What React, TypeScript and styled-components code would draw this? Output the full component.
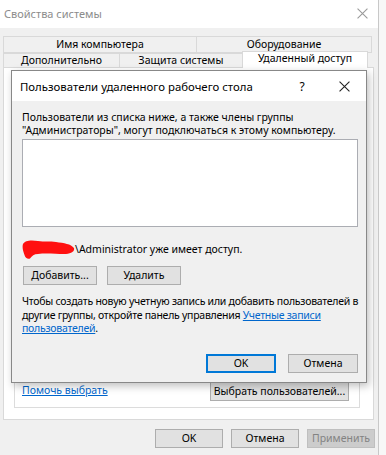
import React from "react";
import styled, { createGlobalStyle } from "styled-components";

const Global = createGlobalStyle`
  html, body { margin: 0; padding: 0; background: #f7f7f7; }
  body { font-family: "Noto Sans", "Segoe UI", Arial, sans-serif; font-size: 10.5px; color: #000; }
  * { box-sizing: border-box; }
`;

const Win = styled.div`
  width: 379px;
  height: 455px;
  background: #f0f0f0;
  border-right: 1px solid #c8c8c8;
  display: flex;
  flex-direction: column;
`;

const TitleBar = styled.div`
  height: 28px;
  flex: none;
  background: #fff;
  display: flex;
  align-items: center;
  justify-content: space-between;
  padding: 0 10px 2px 4px;
  color: #8c8c8c;
  font-size: 11px;
`;

const Body = styled.div`
  padding: 8px 0 0 3px;
  display: flex;
  flex-direction: column;
`;

const TabRow = styled.div<{ $h: number }>`
  display: flex;
  height: ${(p) => p.$h}px;
`;

const Tab = styled.div<{ $w: number; $sel?: boolean }>`
  width: ${(p) => p.$w}px;
  height: ${(p) => (p.$sel ? 17 : undefined)}px;
  margin-top: ${(p) => (p.$sel ? -2 : 0)}px;
  margin-left: -1px;
  &:first-child { margin-left: 0; }
  border: 1px solid #d9d9d9;
  border-bottom: ${(p) => (p.$sel ? "none" : "1px solid #d9d9d9")};
  background: ${(p) => (p.$sel ? "#fff" : "#f0f0f0")};
  position: relative;
  z-index: ${(p) => (p.$sel ? 2 : 0)};
  display: flex;
  align-items: center;
  justify-content: center;
  font-size: 10.5px;
  line-height: 1;
  white-space: nowrap;
  padding-bottom: ${(p) => (p.$sel ? 3 : 0)}px;
`;

const Panel = styled.div`
  width: 371px;
  height: 353px;
  margin-top: -1px;
  border: 1px solid #d9d9d9;
  background: #fff;
  position: relative;
  display: flex;
  flex-direction: column;
  justify-content: flex-end;
  padding: 0 13px 11px 10px;
`;

const GroupBox = styled.div`
  height: 120px;
  border: 1px solid #dcdcdc;
  display: flex;
  align-items: flex-end;
  justify-content: space-between;
  padding: 0 10px 6px 7px;
`;

const Link = styled.span`
  color: #0066cc;
  text-decoration: underline;
  cursor: pointer;
`;

const HelpLink = styled(Link)`
  margin-bottom: 4px;
`;

const Btn = styled.button<{ $w: number; $primary?: boolean; $disabled?: boolean }>`
  width: ${(p) => p.$w}px;
  height: 19px;
  padding: 0;
  font-family: inherit;
  font-size: 10.5px;
  line-height: 1;
  white-space: nowrap;
  background: ${(p) => (p.$disabled ? "#cccccc" : "#e1e1e1")};
  color: ${(p) => (p.$disabled ? "#838383" : "#000")};
  border: ${(p) => (p.$primary ? "2px solid #0078d7" : p.$disabled ? "1px solid #bfbfbf" : "1px solid #adadad")};
`;

const Footer = styled.div`
  display: flex;
  justify-content: flex-end;
  gap: 8px;
  padding: 9px 3px 0 0;
`;

const Dialog = styled.div`
  position: absolute;
  left: 7px;
  top: 2px;
  width: 356px;
  height: 313px;
  border: 1px solid #888;
  background: #f0f0f0;
  box-shadow: 2px 3px 8px rgba(0, 0, 0, 0.25);
  display: flex;
  flex-direction: column;
  z-index: 5;
`;

const DlgTitle = styled.div`
  height: 30px;
  flex: none;
  background: #fff;
  display: flex;
  align-items: center;
  padding: 0 0 0 8px;
  font-size: 11.4px;
`;

const DlgTitleText = styled.span`
  flex: 1;
`;

const Help = styled.span`
  width: 20px;
  text-align: center;
  font-size: 12px;
  margin-right: 27px;
`;

const CloseIcon = styled.svg<{ $c: string }>`
  stroke: ${(p) => p.$c};
  stroke-width: 1;
  fill: none;
  flex: none;
`;

const DlgBody = styled.div`
  flex: 1;
  display: flex;
  flex-direction: column;
  padding: 10px 8px 9px 10px;
`;

const Line = styled.div`
  line-height: 13px;
  white-space: nowrap;
`;

const ListBox = styled.div`
  margin-top: 2px;
  width: 336px;
  height: 88px;
  background: #fff;
  border: 1px solid #abadb3;
`;

const AccessLine = styled.div`
  margin-top: 12px;
  height: 20px;
  display: flex;
  align-items: center;
`;

const BtnRow = styled.div`
  margin-top: 7px;
  display: flex;
  gap: 10px;
  padding-left: 1px;
`;

const Info = styled.div`
  margin-top: 10px;
  display: flex;
  flex-direction: column;
  letter-spacing: -0.25px;
  & > div { line-height: 13.5px; }
`;

const DlgFooter = styled.div`
  margin-top: auto;
  display: flex;
  justify-content: flex-end;
  gap: 12px;
`;

const Scribble = () => (
  <svg width="53" height="20" viewBox="0 0 53 20" style={{ flex: "none" }}>
    <path
      d="M1 5 C3 1 10 1 16 2 C22 3 28 2 34 3 C42 4 49 5 52 9 C53 13 48 15 42 15 C34 15 24 14 16 15 C12 15 10 17 8 19.5 C6 20.5 3 19 2.5 16 C1 12 0 8 1 5 Z"
      fill="#ff1010"
    />
  </svg>
);

const Close = ({ c, size }: { c: string; size: number }) => (
  <CloseIcon $c={c} width={size} height={size} viewBox="0 0 10 10">
    <path d="M0.5 0.5 L9.5 9.5 M9.5 0.5 L0.5 9.5" />
  </CloseIcon>
);

export default function App() {
  return (
    <>
      <Global />
      <Win>
        <TitleBar>
          <span>Свойства системы</span>
          <Close c="#9a9a9a" size={11} />
        </TitleBar>
        <Body>
          <TabRow $h={17}>
            <Tab $w={194}>Имя компьютера</Tab>
            <Tab $w={176}>Оборудование</Tab>
          </TabRow>
          <TabRow $h={15}>
            <Tab $w={117}>Дополнительно</Tab>
            <Tab $w={124}>Защита системы</Tab>
            <Tab $w={126} $sel>
              Удаленный доступ
            </Tab>
          </TabRow>
          <Panel>
            <GroupBox>
              <HelpLink>Помочь выбрать</HelpLink>
              <Btn $w={139}>Выбрать пользователей...</Btn>
            </GroupBox>
            <Dialog>
              <DlgTitle>
                <DlgTitleText>Пользователи удаленного рабочего стола</DlgTitleText>
                <Help>?</Help>
                <Close c="#222" size={11} />
                <span style={{ width: 16 }} />
              </DlgTitle>
              <DlgBody>
                <Line>Пользователи из списка ниже, а также члены группы</Line>
                <Line>"Администраторы", могут подключаться к этому компьютеру.</Line>
                <ListBox />
                <AccessLine>
                  <Scribble />
                  <span>\Administrator уже имеет доступ.</span>
                </AccessLine>
                <BtnRow>
                  <Btn $w={74}>Добавить...</Btn>
                  <Btn $w={74}>Удалить</Btn>
                </BtnRow>
                <Info>
                  <Line>Чтобы создать новую учетную запись или добавить пользователей в</Line>
                  <Line>
                    другие группы, откройте панель управления <Link>Учетные записи</Link>
                  </Line>
                  <Line>
                    <Link>пользователей</Link>.
                  </Line>
                </Info>
                <DlgFooter>
                  <Btn $w={70} $primary>
                    OK
                  </Btn>
                  <Btn $w={70}>Отмена</Btn>
                </DlgFooter>
              </DlgBody>
            </Dialog>
          </Panel>
          <Footer>
            <Btn $w={68}>OK</Btn>
            <Btn $w={68}>Отмена</Btn>
            <Btn $w={68} $disabled>
              Применить
            </Btn>
          </Footer>
        </Body>
      </Win>
    </>
  );
}
